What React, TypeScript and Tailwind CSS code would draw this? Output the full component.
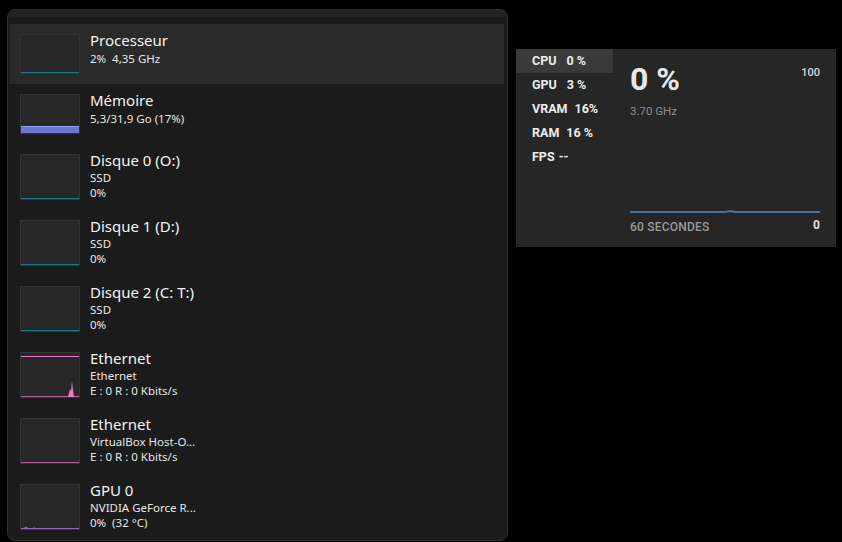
import type { ReactNode } from "react";

type Row = {
  title: string;
  lines: string[];
  graph: ReactNode;
  selected?: boolean;
};

function Thumb({ h, children }: { h: number; children?: ReactNode }) {
  return (
    <svg width={60} height={h} className="shrink-0 block">
      <rect x={0.5} y={0.5} width={59} height={h - 1} fill="#272727" stroke="#333333" />
      {children}
    </svg>
  );
}

const teal = (h: number) => <line x1={1} x2={59} y1={h - 1.5} y2={h - 1.5} stroke="#1b7880" strokeWidth={1} />;

const rows: Row[] = [
  { title: "Processeur", lines: ["2%  4,35 GHz"], graph: <Thumb h={40}>{teal(40)}</Thumb>, selected: true },
  {
    title: "Mémoire",
    lines: ["5,3/31,9 Go (17%)"],
    graph: (
      <Thumb h={40}>
        <rect x={1} y={32} width={58} height={7} fill="#6a76cf" />
        <line x1={1} x2={59} y1={32.5} y2={32.5} stroke="#97a1ec" />
      </Thumb>
    ),
  },
  { title: "Disque 0 (O:)", lines: ["SSD", "0%"], graph: <Thumb h={46}>{teal(46)}</Thumb> },
  { title: "Disque 1 (D:)", lines: ["SSD", "0%"], graph: <Thumb h={46}>{teal(46)}</Thumb> },
  { title: "Disque 2 (C: T:)", lines: ["SSD", "0%"], graph: <Thumb h={46}>{teal(46)}</Thumb> },
  {
    title: "Ethernet",
    lines: ["Ethernet", "E : 0 R : 0 Kbits/s"],
    graph: (
      <Thumb h={46}>
        <line x1={1} x2={59} y1={4.5} y2={4.5} stroke="#e27bc4" />
        <line x1={1} x2={59} y1={44.5} y2={44.5} stroke="#b85e94" />
        <polygon points="48,45 50,37 51,39 52,29 53,38 54,45" fill="#e57cc6" />
      </Thumb>
    ),
  },
  {
    title: "Ethernet",
    lines: ["VirtualBox Host-O...", "E : 0 R : 0 Kbits/s"],
    graph: (
      <Thumb h={46}>
        <line x1={1} x2={59} y1={44.5} y2={44.5} stroke="#b85e94" />
      </Thumb>
    ),
  },
  {
    title: "GPU 0",
    lines: ["NVIDIA GeForce R...", "0%  (32 °C)"],
    graph: (
      <Thumb h={46}>
        <polygon points="3,45 5,43 7,43 9,45 13,45 14,43 16,45 21,45 22,44 23,45 28,45 29,44 30,45 59,45 59,43 58,45" fill="#8d68c9" />
        <line x1={1} x2={59} y1={44.5} y2={44.5} stroke="#8d68c9" />
      </Thumb>
    ),
  },
];

function ResourceRow({ row }: { row: Row }) {
  const tall = row.lines.length > 1;
  return (
    <div
      className={`flex items-start gap-[10px] pl-[10px] ${tall ? "h-[66px]" : "h-[60px]"} ${
        row.selected ? "bg-[#2a2a2a]" : ""
      }`}
    >
      <div className="pt-[10px]">{row.graph}</div>
      <div className="flex flex-col pt-[6px]">
        <div className="text-[15px] leading-[20px] text-[#f3f3f3]">{row.title}</div>
        <div className={tall ? "" : "mt-[1px]"}>
          {row.lines.map((l, i) => (
            <div key={i} className="text-[11.5px] leading-[15px] text-[#e6e6e6] whitespace-pre">
              {l}
            </div>
          ))}
        </div>
      </div>
    </div>
  );
}

const stats = [
  { k: "CPU", v: "0 %", gap: "ml-[10px]", on: true },
  { k: "GPU", v: "3 %", gap: "ml-[10px]" },
  { k: "VRAM", v: "16%", gap: "ml-[7px]" },
  { k: "RAM", v: "16 %", gap: "ml-[7px]" },
  { k: "FPS", v: "--", gap: "ml-[4px]" },
];

function PerfWidget() {
  return (
    <div className="ml-[8px] mt-[49px] w-[320px] h-[198px] bg-[#262626] flex font-['Roboto',sans-serif]">
      <div className="w-[97px] flex flex-col">
        {stats.map((s) => (
          <div
            key={s.k}
            className={`h-[24px] pl-[16px] flex items-center text-[12.5px] font-bold text-[#ececec] ${
              s.on ? "bg-[#3a3a3a]" : ""
            }`}
          >
            <span>{s.k}</span>
            <span className={s.gap}>{s.v}</span>
          </div>
        ))}
      </div>
      <div className="flex-1 flex flex-col pl-[17px] pr-[16px] pt-[14px] pb-[13px]">
        <div className="flex items-start justify-between">
          <span className="text-[32px] leading-[32px] font-bold text-[#e8e8e8]">0 %</span>
          <span className="mt-[3px] text-[11px] leading-[14px] font-medium text-[#dcdcdc]">100</span>
        </div>
        <div className="mt-[9px] text-[11.5px] leading-[14px] text-[#8c8c8c]">3.70 GHz</div>
        <div className="flex-1" />
        <svg width={190} height={8} className="block">
          <polyline
            points="0,4 60,4 95,4 100,3 105,4 120,4 150,4 190,4"
            fill="none"
            stroke="#4a6fa8"
            strokeWidth={2}
          />
        </svg>
        <div className="mt-[2px] flex items-end justify-between">
          <span className="text-[12px] leading-[14px] font-medium text-[#9a9a9a] tracking-[0.2px]">60 SECONDES</span>
          <span className="text-[12px] leading-[14px] font-bold text-[#e0e0e0] mb-[2px]">0</span>
        </div>
      </div>
    </div>
  );
}

export default function App() {
  return (
    <div className="w-[842px] h-[542px] bg-black flex items-start overflow-hidden">
      <div className="ml-[7px] mt-[9px] w-[501px] h-[532px] rounded-[8px] border border-[#2e2e2e] bg-[#1b1b1b] overflow-hidden flex flex-col font-['Noto_Sans',sans-serif]">
        <div className="h-[7px] bg-[#222222] shrink-0" />
        <div className="h-[7px] shrink-0" />
        <div className="ml-[2px] mr-[3px] flex flex-col">
          {rows.map((r, i) => (
            <ResourceRow key={i} row={r} />
          ))}
        </div>
      </div>
      <PerfWidget />
    </div>
  );
}
